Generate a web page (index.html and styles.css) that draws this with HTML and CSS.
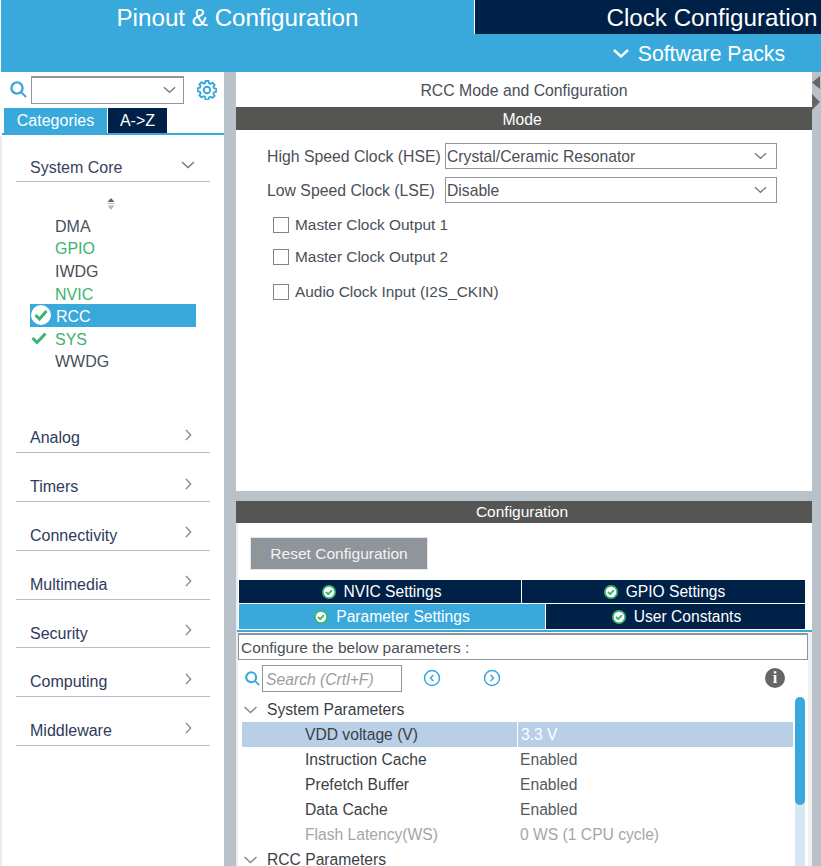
FILE: index.html
```html
<!DOCTYPE html>
<html lang="en">
<head>
<meta charset="utf-8">
<title>Pinout &amp; Configuration</title>
<link rel="stylesheet" href="styles.css">
</head>
<body>
<svg class="defs" width="0" height="0" aria-hidden="true">
  <symbol id="chev-down" viewBox="0 0 14 8"><path d="M1 1l6 5.5L13 1" fill="none" stroke="currentColor" stroke-width="1.4"/></symbol>
  <symbol id="chev-right" viewBox="0 0 8 14"><path d="M1 1l5.5 6L1 13" fill="none" stroke="currentColor" stroke-width="1.6"/></symbol>
  <symbol id="tick-badge" viewBox="0 0 16 16"><circle cx="8" cy="8" r="7" fill="#fff" stroke="#3cb371" stroke-width="2"/><path d="M4.400 7.800l2.600 2.600 4.400-4.600" fill="none" stroke="#3cb371" stroke-width="2.200"/></symbol>
  <symbol id="tick-white" viewBox="0 0 20 20"><circle cx="10" cy="10" r="10" fill="#fff"/><path d="M4.500 10l4 4L15.500 6" fill="none" stroke="#3cb371" stroke-width="3"/></symbol>
  <symbol id="search" viewBox="0 0 17 17"><circle cx="7" cy="7" r="5.600" fill="none" stroke="currentColor" stroke-width="2.400"/><path d="M11 11l5 5" stroke="currentColor" stroke-width="2"/></symbol>
</svg>
<header class="top">
  <div class="tabs">
    <div class="tab tab-on">Pinout &amp; Configuration</div>
    <div class="tab tab-off">Clock Configuration</div>
  </div>
  <div class="subbar">
    <div class="packs">
      <svg class="packs-chev" viewBox="0 0 16 9"><path d="M1 1l7 6.500L15 1" fill="none" stroke="#fff" stroke-width="2.400"/></svg>
      <span>Software Packs</span>
    </div>
  </div>
</header>
<main class="main">
  <aside class="side">
    <div class="side-search">
      <svg class="ic-search"><use href="#search"/></svg>
      <div class="combo"><svg class="chev"><use href="#chev-down"/></svg></div>
      <svg class="gear" viewBox="0 0 20 20">
        <path d="M8.500 1h3l.5 2.200 1.600.7 1.900-1.200 2.100 2.100-1.200 1.900.7 1.600 2.200.5v3l-2.200.5-.7 1.600 1.200 1.900-2.100 2.100-1.900-1.200-1.600.7-.5 2.200h-3L8 16.900l-1.600-.7-1.900 1.200-2.100-2.100 1.200-1.900-.7-1.600-2.200-.5v-3l2.200-.5.7-1.600-1.200-1.900 2.100-2.100 1.900 1.200L8 3.200z" fill="none" stroke="#39a9dc" stroke-width="1.900"/>
        <circle cx="10" cy="10" r="3.200" fill="none" stroke="#39a9dc" stroke-width="2"/>
      </svg>
    </div>
    <div class="side-tabs">
      <div class="stab stab-on">Categories</div>
      <div class="stab stab-off">A-&gt;Z</div>
    </div>
    <div class="side-rule"></div>
    <div class="side-body">
      <div class="acc acc-open">
        <span>System Core</span>
        <svg class="chev-big"><use href="#chev-down"/></svg>
      </div>
      <div class="sorter">
        <svg viewBox="0 0 10 14" width="10" height="14"><path d="M5 1l3.500 4h-7z" fill="#666"/><path d="M1.500 6.500h7" stroke="#bbb" stroke-width="1"/><path d="M1.500 8.500h7L5 13z" fill="#bbb"/></svg>
      </div>
      <ul class="items">
        <li class="item">DMA</li>
        <li class="item item-ok">GPIO</li>
        <li class="item">IWDG</li>
        <li class="item item-ok">NVIC</li>
        <li class="item item-sel"><svg class="badge-big"><use href="#tick-white"/></svg>RCC</li>
        <li class="item item-ok"><svg class="tick" viewBox="0 0 16 12"><path d="M1.500 6l4.500 4.500L14.500 1.500" fill="none" stroke="#3cb371" stroke-width="3"/></svg>SYS</li>
        <li class="item">WWDG</li>
      </ul>
      <div class="acc"><span>Analog</span><svg class="chev-r"><use href="#chev-right"/></svg></div>
      <div class="acc"><span>Timers</span><svg class="chev-r"><use href="#chev-right"/></svg></div>
      <div class="acc"><span>Connectivity</span><svg class="chev-r"><use href="#chev-right"/></svg></div>
      <div class="acc"><span>Multimedia</span><svg class="chev-r"><use href="#chev-right"/></svg></div>
      <div class="acc"><span>Security</span><svg class="chev-r"><use href="#chev-right"/></svg></div>
      <div class="acc"><span>Computing</span><svg class="chev-r"><use href="#chev-right"/></svg></div>
      <div class="acc"><span>Middleware</span><svg class="chev-r"><use href="#chev-right"/></svg></div>
    </div>
  </aside>
  <section class="content">
    <div class="mode">
      <div class="mode-title">RCC Mode and Configuration</div>
      <div class="bar bar-mode">Mode</div>
      <div class="mode-form">
        <div class="field"><label class="field-label">High Speed Clock (HSE)</label><div class="select"><span>Crystal/Ceramic Resonator</span><svg class="chev"><use href="#chev-down"/></svg></div></div>
        <div class="field"><label class="field-label">Low Speed Clock (LSE)</label><div class="select"><span>Disable</span><svg class="chev"><use href="#chev-down"/></svg></div></div>
        <div class="check check-a"><span class="box"></span>Master Clock Output 1</div>
        <div class="check check-b"><span class="box"></span>Master Clock Output 2</div>
        <div class="check check-c"><span class="box"></span>Audio Clock Input (I2S_CKIN)</div>
      </div>
    </div>
    <div class="config">
      <div class="bar bar-config">Configuration</div>
      <button class="reset" type="button">Reset Configuration</button>
      <div class="ptabs">
        <div class="prow">
          <div class="ptab ptab-half"><svg class="badge"><use href="#tick-badge"/></svg>NVIC Settings</div>
          <div class="ptab ptab-half2"><svg class="badge"><use href="#tick-badge"/></svg>GPIO Settings</div>
        </div>
        <div class="prow prow-2">
          <div class="ptab ptab-active"><svg class="badge"><use href="#tick-badge"/></svg>Parameter Settings</div>
          <div class="ptab ptab-user"><svg class="badge"><use href="#tick-badge"/></svg>User Constants</div>
        </div>
      </div>
      <div class="ptab-rule"></div>
      <div class="hint">Configure the below parameters :</div>
      <div class="tools">
        <svg class="ic-search-sm"><use href="#search"/></svg>
        <div class="search-box">Search (Crtl+F)</div>
        <svg class="nav nav-a" viewBox="0 0 18 18"><circle cx="9" cy="9" r="7.500" fill="none" stroke="#39a9dc" stroke-width="1.500"/><path d="M10.500 6l-3 3 3 3" fill="none" stroke="#39a9dc" stroke-width="1.500"/></svg>
        <svg class="nav nav-b" viewBox="0 0 18 18"><circle cx="9" cy="9" r="7.500" fill="none" stroke="#39a9dc" stroke-width="1.500"/><path d="M7.500 6l3 3-3 3" fill="none" stroke="#39a9dc" stroke-width="1.500"/></svg>
        <div class="info">i</div>
      </div>
      <div class="tree-wrap">
        <div class="tree">
          <div class="group"><svg class="chev-tree"><use href="#chev-down"/></svg>System Parameters</div>
          <div class="row row-sel"><span class="k">VDD voltage (V)</span><span class="v">3.3 V</span></div>
          <div class="row"><span class="k">Instruction Cache</span><span class="v">Enabled</span></div>
          <div class="row"><span class="k">Prefetch Buffer</span><span class="v">Enabled</span></div>
          <div class="row"><span class="k">Data Cache</span><span class="v">Enabled</span></div>
          <div class="row row-off"><span class="k">Flash Latency(WS)</span><span class="v">0 WS (1 CPU cycle)</span></div>
          <div class="group"><svg class="chev-tree"><use href="#chev-down"/></svg>RCC Parameters</div>
        </div>
        <div class="scroll"><div class="thumb"></div></div>
      </div>
    </div>
  </section>
  <div class="edge">
    <svg class="edge-arrows" viewBox="0 0 9 36" width="9" height="36"><path d="M8 0v13L0 6.500z" fill="#666"/><path d="M0 18v16l8-8z" fill="#666"/></svg>
  </div>
</main>
</body>
</html>
```
FILE: styles.css
```css
* { box-sizing: border-box; }
html, body { margin: 0; height: 866px; overflow: hidden; background: #fff; }
body { font-family: "Liberation Sans", Arial, sans-serif; font-size: 16px; color: #4a4f57; width: 821px; }
.defs { display: block; height: 0; }
svg { display: block; flex: none; }

.top { padding-left: 1px; background: #fff; }
.tabs { display: flex; height: 34px; overflow: hidden; }
.tab { flex: 0 0 474px; color: #fff; font-size: 24.200px; text-align: center; line-height: 36px; }
.tab-on { background: #39a9dc; flex-basis: 473px; }
.tab-off { background: #002147; margin-left: 1px; }
.subbar { height: 38px; background: #39a9dc; display: flex; justify-content: flex-end; padding-right: 36px; }
.packs { display: flex; align-items: center; gap: 9px; color: #fff; font-size: 21.200px; padding-top: 2px; }
.packs-chev { width: 16px; height: 9px; margin-top: -2px; }

.main { display: flex; height: 794px; background: #b8c2c8; }
.side { width: 224px; background: #fff; flex: none; }
.side-search { display: flex; align-items: center; height: 33px; padding: 2px 0 0 10px; }
.ic-search { width: 17px; height: 17px; color: #39a9dc; }
.combo { width: 153px; height: 28px; margin-left: 4px; border: 1px solid #8f959b; border-top-width: 2px; display: flex; align-items: center; justify-content: flex-end; padding-right: 7px; background: #fff; }
.chev { width: 13px; height: 8px; color: #777; }
.gear { width: 20px; height: 20px; margin-left: 13px; }
.side-tabs { display: flex; height: 28px; padding: 3px 0 0 4px; gap: 1px; }
.stab { height: 25px; line-height: 25px; text-align: center; color: #fff; }
.stab-on { width: 103px; background: #39a9dc; }
.stab-off { width: 59px; background: #002147; }
.side-rule { height: 3px; margin-left: 2px; border-top: 2px solid #39a9dc; }
.side-body { border-left: 2px solid #ebeced; height: 730px; padding: 0 14px; }
.acc { display: flex; justify-content: space-between; align-items: center; height: 48.800px; padding: 23px 15px 3px 14px; border-bottom: 1px solid #b4bec8; color: #2f3a5c; }
.acc-open { height: 46px; padding-top: 21px; color: #3a4160; }
.chev-big { width: 14px; height: 8px; color: #777; margin-top: -6px; }
.chev-r { width: 7px; height: 12px; color: #888; margin-top: -7px; margin-right: 3px; }
.sorter { display: flex; justify-content: flex-start; padding: 15px 0 0 90px; height: 31.600px; }
.items { list-style: none; margin: 0 0 0 14px; padding: 0 0 32.700px; width: 166px; }
.item { height: 22.600px; padding: 4px 0 0 25px; display: flex; align-items: center; color: #4a4f57; }
.item-ok { color: #3cb371; }
.item-sel { background: #39a9dc; color: #fff; padding-left: 1px; gap: 5px; }
.badge-big { width: 20px; height: 20px; margin-top: -4px; }
.tick { width: 16px; height: 12px; margin-left: -24px; margin-right: 8px; margin-top: -4px; }

.content { width: 576px; flex: none; margin-left: 12px; display: flex; flex-direction: column; gap: 10px; }
.mode { height: 419px; background: #fff; }
.mode-title { height: 35px; line-height: 38px; text-align: center; font-size: 15.800px; color: #4a4f57; }
.bar { background: #555654; color: #fff; text-align: center; height: 23px; padding-right: 4px; line-height: 25px; font-size: 15.700px; }
.mode-form { padding: 13px 35px 0 31px; }
.field { display: flex; align-items: center; height: 26px; margin-bottom: 8px; font-size: 15.800px; }
.field-label { width: 178px; flex: none; padding-top: 2px; }
.select { width: 332px; height: 26px; border: 1px solid #8f959b; display: flex; align-items: center; justify-content: space-between; padding: 0 9px 0 1px; }
.select span { padding-top: 2px; font-size: 15.700px; }
.check { display: flex; align-items: center; height: 16px; padding-left: 6px; gap: 6px; font-size: 15.400px; }
.check-a { margin-top: 14px; }
.check-b { margin-top: 16px; }
.check-c { margin-top: 19px; }
.box { width: 16px; height: 16px; border: 1.500px solid #808488; background: #fff; flex: none; }

.config { flex: 1; min-height: 0; border-left: 2px solid #ebeced; background: linear-gradient(#f2f2f2, #f2f2f2) right bottom / 4px 234px no-repeat, #fff; }
.bar-config { margin-left: -2px; height: 22px; line-height: 22px; font-size: 15.500px; }
.reset { display: block; margin: 14px 0 0 12px; width: 178px; height: 33px; background: #8f959b; border: 1px solid #e4e6e8; color: #f2f3f4; font: 15.550px "Liberation Sans", Arial, sans-serif; padding: 0; }
.ptabs { margin: 10px 0 0 1px; width: 566px; font-size: 15.600px; }
.prow { display: flex; height: 24px; gap: 1px; }
.prow-2 { height: 26px; }
.ptab { display: flex; align-items: center; justify-content: center; gap: 8px; background: #002147; color: #fff; border-bottom: 1px solid #fff; }
.ptab-half { width: 282px; padding-left: 3px; }
.ptab-half2 { flex: 1; padding-left: 2px; }
.ptab-active { width: 306px; background: #39a9dc; }
.ptab-user { flex: 1; padding-left: 2px; }
.badge { width: 14px; height: 14px; }
.ptab-rule { margin: 0 0 0 -1px; width: 575px; height: 3px; border-top: 2px solid #39a9dc; }
.hint { width: 570px; height: 27px; border: 1px solid #8f959b; border-top-width: 2px; line-height: 25px; padding-left: 2px; color: #4a4f57; font-size: 15.450px; }
.tools { display: flex; align-items: center; height: 36px; margin-bottom: 1px; padding-left: 7px; }
.ic-search-sm { width: 15px; height: 15px; color: #39a9dc; }
.search-box { width: 140px; height: 27px; margin-left: 2px; border: 1px solid #8f959b; line-height: 27px; padding-left: 3px; font-style: italic; color: #9a9ea3; font-size: 15.700px; }
.nav { width: 18px; height: 18px; }
.nav-a { margin-left: 21px; }
.nav-b { margin-left: 42px; }
.info { width: 20px; height: 20px; border-radius: 50%; background: #666; color: #fff; font: bold 16px/20px "Liberation Serif", serif; text-align: center; margin-left: 264px; }
.tree-wrap { display: flex; height: 170px; overflow: hidden; }
.tree { width: 555px; padding-left: 4px; font-size: 15.650px; }
.group { display: flex; align-items: center; height: 25px; color: #3a3f47; gap: 9px; padding-left: 1px; }
.chev-tree { width: 15px; height: 8px; color: #888; }
.row { display: flex; height: 25px; line-height: 25px; color: #3a3f47; }
.row-sel { background: #b8cfe6; }
.k { width: 275px; padding-left: 63px; flex: none; }
.v { flex: 1; padding-left: 3px; color: #55595f; }
.row-sel .v { border-left: 1px solid #fff; color: #fff; }
.row-off .k, .row-off .v { color: #a3a6aa; }
.scroll { width: 10px; margin-left: 2px; background: linear-gradient(#fff 50px, #d6e6f4 50px); }
.thumb { height: 108px; background: #39a9dc; border-radius: 5px; }
.edge { flex: 1; }
.edge-arrows { margin-top: 4px; }
```
